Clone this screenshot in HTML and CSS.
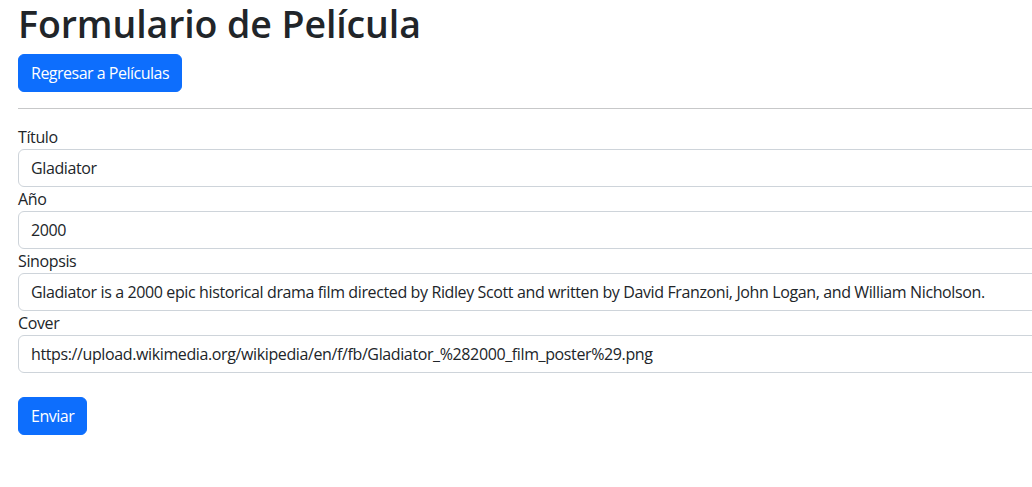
FILE: index.html
```html
<!DOCTYPE html>
<html lang="es">
<head>
<meta charset="utf-8">
<title>Formulario de Película</title>
<link rel="stylesheet" href="styles.css">
</head>
<body>
<div class="page">
  <h1 class="title">Formulario de Película</h1>
  <a class="btn" href="#">Regresar a Películas</a>
  <hr class="divider">
  <form class="form">
    <div class="field">
      <label class="label" for="titulo">Título</label>
      <input class="input" id="titulo" type="text" value="Gladiator">
    </div>
    <div class="field">
      <label class="label" for="anio">Año</label>
      <input class="input" id="anio" type="text" value="2000">
    </div>
    <div class="field">
      <label class="label" for="sinopsis">Sinopsis</label>
      <input class="input" id="sinopsis" type="text" value="Gladiator is a 2000 epic historical drama film directed by Ridley Scott and written by David Franzoni, John Logan, and William Nicholson.">
    </div>
    <div class="field">
      <label class="label" for="cover">Cover</label>
      <input class="input" id="cover" type="text" value="https://upload.wikimedia.org/wikipedia/en/f/fb/Gladiator_%282000_film_poster%29.png">
    </div>
    <div class="actions">
      <button class="btn" type="button">Enviar</button>
    </div>
  </form>
</div>
</body>
</html>
```

FILE: styles.css
```css
html, body {
  margin: 0;
  padding: 0;
  overflow: hidden;
  background: #fff;
}
body {
  font-family: "Open Sans", "Noto Sans", sans-serif;
  font-size: 16px;
  line-height: 1.5;
  letter-spacing: -0.38px;
  color: #212529;
}
.page {
  padding: 1px 0 0 18px;
  margin-right: -30px;
}
.title {
  margin: 0 0 8px 0;
  font-size: 37.5px;
  font-weight: 600;
  line-height: 1.2;
  letter-spacing: -0.1px;
}
.btn {
  display: inline-block;
  box-sizing: border-box;
  height: 38px;
  padding: 6px 12px;
  font-family: inherit;
  font-size: 16px;
  line-height: 24px;
  letter-spacing: -0.5px;
  color: #fff;
  background: #0d6efd;
  border: 1px solid #0d6efd;
  border-radius: 6px;
  text-decoration: none;
  cursor: pointer;
}
.divider {
  margin: 16px 0;
  border: 0;
  border-top: 1px solid #212529;
  opacity: 0.25;
}
.form {
  display: flex;
  flex-direction: column;
}
.field {
  display: flex;
  flex-direction: column;
}
.label {
  line-height: 24px;
}
.input {
  box-sizing: border-box;
  width: 100%;
  height: 38px;
  padding: 6px 12px;
  font-family: inherit;
  font-size: 16px;
  line-height: 24px;
  letter-spacing: -0.38px;
  color: #212529;
  background: #fff;
  border: 1px solid #ced4da;
  border-radius: 6px;
}
.actions {
  margin-top: 24px;
}
```
